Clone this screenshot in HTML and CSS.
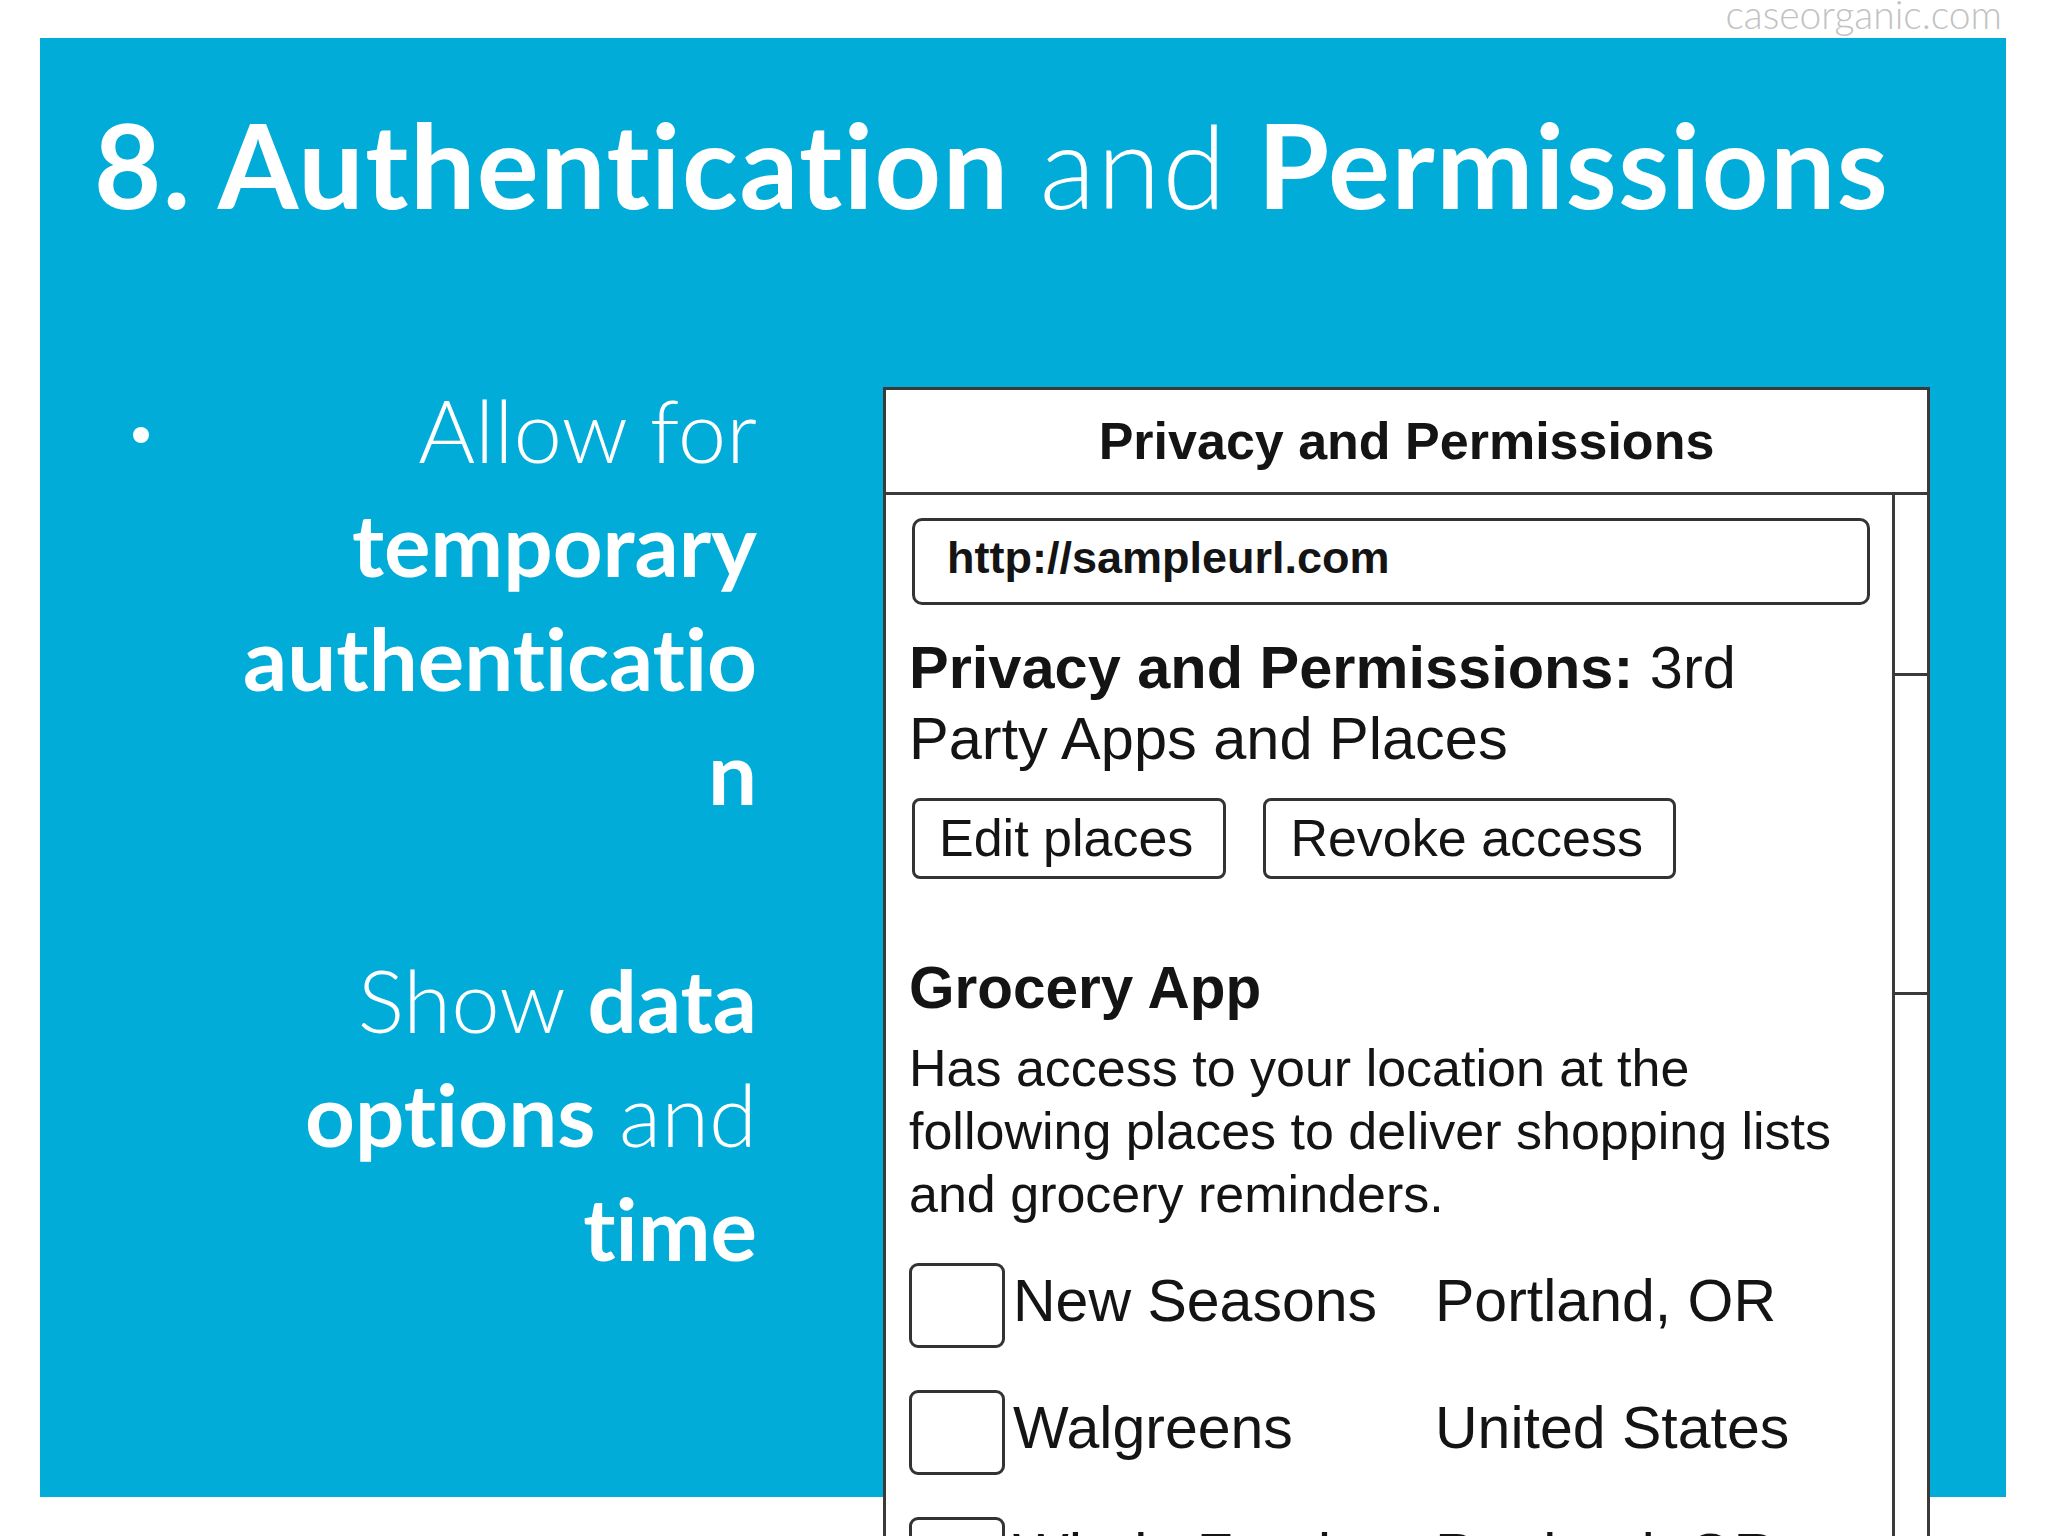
FILE: index.html
```html
<!DOCTYPE html>
<html lang="en">
<head>
<meta charset="utf-8">
<title>8. Authentication and Permissions</title>
<link rel="stylesheet" href="styles.css">
</head>
<body>
<div class="brand">caseorganic.com</div>
<section class="slide">
  <h1 class="title"><b>8. Authentication</b> <span class="light">and</span> <b>Permissions</b></h1>
  <div class="content">
    <div class="bullets">
      <span class="dot"></span>
      <p class="points">
        <span class="light">Allow for</span><br>
        <b>temporary</b><br>
        <b>authenticatio</b><br>
        <b>n</b><br>
        <br>
        <span class="light">Show</span> <b>data</b><br>
        <b>options</b> <span class="light">and</span><br>
        <b>time</b>
      </p>
    </div>
    <div class="dialog">
      <div class="dialog-head">Privacy and Permissions</div>
      <div class="dialog-body">
        <div class="dialog-main">
          <div class="url">http://sampleurl.com</div>
          <h2 class="section-title"><b>Privacy and Permissions:</b> 3rd<br>Party Apps and Places</h2>
          <div class="buttons">
            <span class="btn">Edit places</span>
            <span class="btn">Revoke access</span>
          </div>
          <h3 class="app-name">Grocery App</h3>
          <p class="app-desc">Has access to your location at the<br>following places to deliver shopping lists<br>and grocery reminders.</p>
          <div class="places">
            <div class="place"><span class="check"></span><span class="place-name">New Seasons</span><span class="place-loc">Portland, OR</span></div>
            <div class="place"><span class="check"></span><span class="place-name">Walgreens</span><span class="place-loc">United States</span></div>
            <div class="place"><span class="check"></span><span class="place-name">Whole Foods</span><span class="place-loc">Portland, OR</span></div>
          </div>
        </div>
        <div class="scrollbar"><div class="thumb"></div></div>
      </div>
    </div>
  </div>
</section>
</body>
</html>
```
FILE: styles.css
```css
html, body {
  margin: 0;
  padding: 0;
}
body {
  width: 2048px;
  height: 1536px;
  overflow: hidden;
  background: #ffffff;
  font-family: Lato, "Open Sans", sans-serif;
  font-variant-ligatures: none;
}
.brand {
  height: 38px;
  line-height: 28px;
  font-size: 39px;
  font-weight: 300;
  color: #c2c2c2;
  text-align: right;
  padding-right: 46px;
  box-sizing: border-box;
}
.slide {
  margin-left: 40px;
  width: 1966px;
  height: 1459px;
  background: #02acd9;
  padding: 58px 0 0 54px;
  box-sizing: border-box;
  color: #ffffff;
}
.title {
  margin: 0;
  font-size: 116px;
  line-height: 137px;
  font-weight: 700;
  letter-spacing: 1.5px;
  white-space: nowrap;
}
.title b { font-weight: 700; }
.light { font-weight: 300; }
.points b { font-weight: 700; }
.content {
  display: flex;
  align-items: flex-start;
  margin-top: 140px;
  margin-left: -54px;
}
.bullets {
  width: 717px;
  padding-left: 93px;
  box-sizing: border-box;
  display: flex;
  align-items: flex-start;
}
.dot {
  width: 16px;
  height: 16px;
  border-radius: 50%;
  background: #ffffff;
  margin-top: 54px;
  flex: none;
}
.points {
  flex: 1;
  margin: 0;
  text-align: right;
  font-size: 87px;
  line-height: 114px;
  font-weight: 300;
}
.dialog {
  margin-left: 126px;
  margin-top: 14px;
  width: 1047px;
  height: 1200px;
  background: #ffffff;
  border: 3px solid #3a3a3a;
  border-bottom: none;
  box-sizing: border-box;
  color: #141414;
  font-family: "Liberation Sans", Arial, sans-serif;
  display: flex;
  flex-direction: column;
}
.dialog-head {
  height: 102px;
  line-height: 102px;
  text-align: center;
  font-size: 52px;
  font-weight: 700;
  border-bottom: 3px solid #3a3a3a;
  flex: none;
}
.dialog-body {
  flex: 1;
  display: flex;
  overflow: hidden;
}
.dialog-main {
  flex: 1;
  padding: 23px 22px 0 23px;
}
.url {
  margin-left: 3px;
  height: 87px;
  border: 3px solid #333333;
  border-radius: 10px;
  box-sizing: border-box;
  padding-left: 32px;
  font-size: 45px;
  font-weight: 700;
  line-height: 74px;
}
.section-title {
  margin: 27px 0 0;
  font-size: 59.5px;
  line-height: 71px;
  font-weight: 400;
}
.section-title b { font-weight: 700; }
.buttons {
  display: flex;
  gap: 37px;
  margin: 24px 0 0 3px;
}
.btn {
  height: 81px;
  line-height: 75px;
  border: 3px solid #333333;
  border-radius: 8px;
  box-sizing: border-box;
  padding: 0 30px 0 24px;
  font-size: 52px;
}
.app-name {
  margin: 74px 0 0;
  font-size: 58.5px;
  line-height: 70px;
  font-weight: 700;
}
.app-desc {
  margin: 14px 0 0;
  font-size: 52px;
  line-height: 63px;
}
.places {
  margin-top: 37px;
  display: flex;
  flex-direction: column;
  gap: 42px;
}
.place {
  display: flex;
  align-items: flex-start;
  font-size: 59px;
  line-height: 76px;
}
.check {
  width: 96px;
  height: 85px;
  border: 3px solid #333333;
  border-radius: 9px;
  box-sizing: border-box;
  flex: none;
  margin-right: 8px;
}
.place-name {
  width: 422px;
  flex: none;
}
.scrollbar {
  width: 35px;
  border-left: 3px solid #3a3a3a;
  box-sizing: border-box;
  flex: none;
  padding-top: 178px;
}
.thumb {
  height: 322px;
  border-top: 3px solid #3a3a3a;
  border-bottom: 3px solid #3a3a3a;
  box-sizing: border-box;
}
```
